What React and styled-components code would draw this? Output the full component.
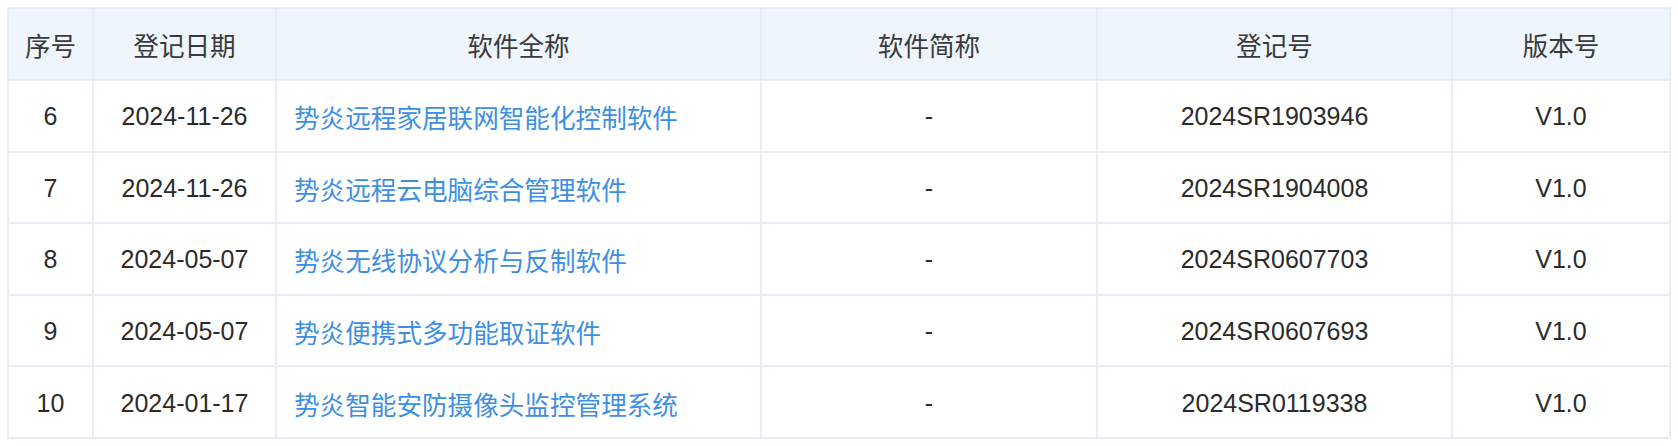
import React from "react";
import styled, { createGlobalStyle } from "styled-components";

const GlobalStyle = createGlobalStyle`
    html, body {
        margin: 0;
        padding: 0;
        background: #ffffff;
    }
    body {
        font-family: "Liberation Sans", "Noto Sans CJK SC", sans-serif;
    }
`;

const Page = styled.div`
    padding: 7px 9px 9px 7px;
`;

const Table = styled.table`
    width: 1662px;
    border-collapse: collapse;
    table-layout: fixed;
    color: #333333;
    border: 2px solid #e6edf6;
`;

const HeadRow = styled.tr`
    height: 72px;
    background: #eef5fd;
`;

const Row = styled.tr`
    height: 71.6px;
    background: #ffffff;
`;

const Th = styled.th`
    font-weight: normal;
    font-size: 25.6px;
    color: #3a3a3a;
    text-align: center;
    border: 2px solid #e6edf6;
    padding: 0;
`;

const Td = styled.td`
    text-align: ${(p) => (p.$left ? "left" : "center")};
    padding: ${(p) => (p.$left ? "2px 0 0 17px" : "2px 0 0 0")};
    border: 2px solid #e6edf6;
    font-size: ${(p) => (p.$link ? "25.6px" : "25px")};
    color: ${(p) => (p.$link ? "#3d8fe3" : "#2b2b2b")};
`;

const columns = [
    { title: "序号", width: 85 },
    { title: "登记日期", width: 183 },
    { title: "软件全称", width: 485 },
    { title: "软件简称", width: 336 },
    { title: "登记号", width: 355 },
    { title: "版本号", width: 218 },
];

const rows = [
    ["6", "2024-11-26", "势炎远程家居联网智能化控制软件", "-", "2024SR1903946", "V1.0"],
    ["7", "2024-11-26", "势炎远程云电脑综合管理软件", "-", "2024SR1904008", "V1.0"],
    ["8", "2024-05-07", "势炎无线协议分析与反制软件", "-", "2024SR0607703", "V1.0"],
    ["9", "2024-05-07", "势炎便携式多功能取证软件", "-", "2024SR0607693", "V1.0"],
    ["10", "2024-01-17", "势炎智能安防摄像头监控管理系统", "-", "2024SR0119338", "V1.0"],
];

const App = () => (
    <Page>
        <GlobalStyle />
        <Table>
            <colgroup>
                {columns.map((c) => (
                    <col key={c.title} style={{ width: c.width }} />
                ))}
            </colgroup>
            <thead>
                <HeadRow>
                    {columns.map((c) => (
                        <Th key={c.title}>{c.title}</Th>
                    ))}
                </HeadRow>
            </thead>
            <tbody>
                {rows.map((r) => (
                    <Row key={r[0]}>
                        <Td>{r[0]}</Td>
                        <Td>{r[1]}</Td>
                        <Td $left $link>
                            {r[2]}
                        </Td>
                        <Td>{r[3]}</Td>
                        <Td>{r[4]}</Td>
                        <Td>{r[5]}</Td>
                    </Row>
                ))}
            </tbody>
        </Table>
    </Page>
);

export default App;
